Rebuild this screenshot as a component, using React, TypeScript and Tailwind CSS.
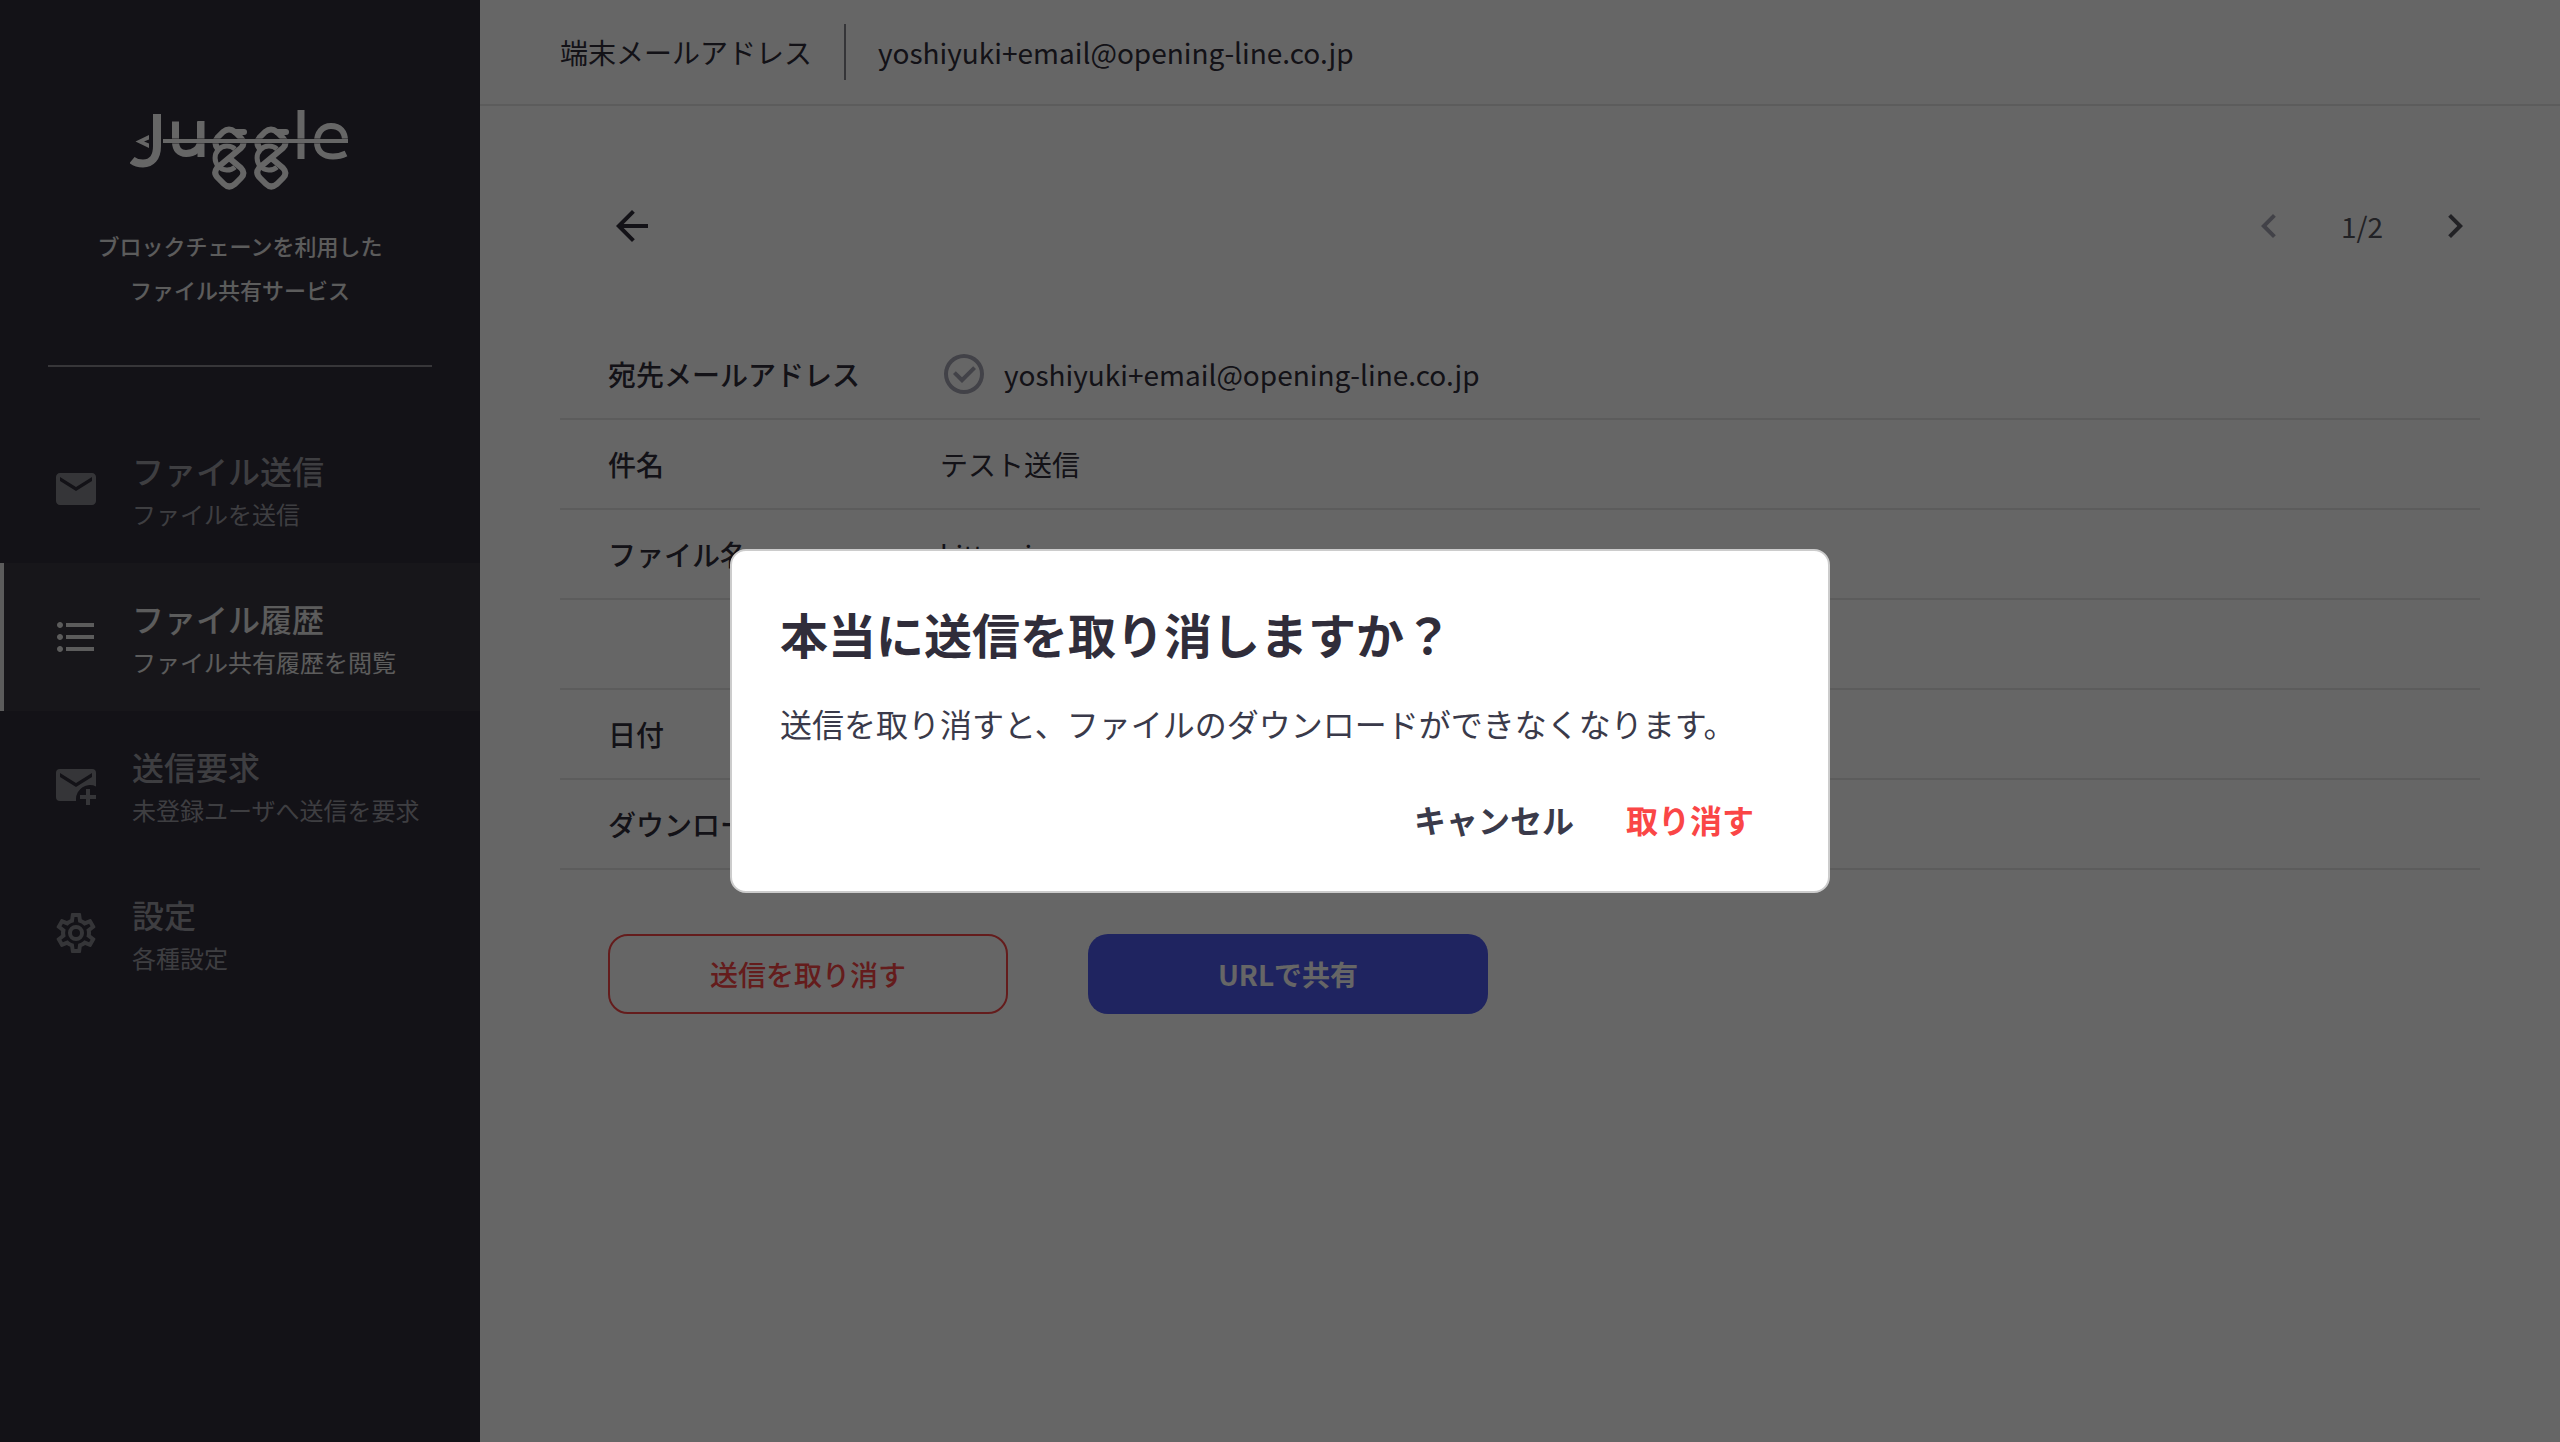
import { MdArrowBack, MdChevronLeft, MdChevronRight, MdEmail, MdFormatListBulleted } from "react-icons/md"
import type { ReactNode } from "react"

interface NavItem {
  title: string
  text: string
  icon: ReactNode
  active?: boolean
}

interface Detail {
  label: string
  value: string
  checked?: boolean
}

function MailPlusIcon() {
  return (
    <svg viewBox="0 0 24 24" className="size-12" fill="currentColor" aria-hidden="true">
      <path d="M4 4a2 2 0 0 0-2 2v12a2 2 0 0 0 2 2h8v-1a7 7 0 0 1 10-6.300V6a2 2 0 0 0-2-2H4zm16 4-8 5-8-5V6l8 5 8-5v2z" />
      <path d="M17 14v3h-3v2h3v3h2v-3h3v-2h-3v-3z" />
    </svg>
  )
}

function CogIcon() {
  return (
    <svg viewBox="0 0 24 24" className="size-12" fill="currentColor" aria-hidden="true">
      <path d="M12 8a4 4 0 0 1 4 4 4 4 0 0 1-4 4 4 4 0 0 1-4-4 4 4 0 0 1 4-4m0 2a2 2 0 0 0-2 2 2 2 0 0 0 2 2 2 2 0 0 0 2-2 2 2 0 0 0-2-2m-2 12c-.25 0-.46-.18-.5-.42l-.37-2.650c-.63-.25-1.170-.59-1.690-.99l-2.490 1.010c-.22.080-.49 0-.61-.22l-2-3.460c-.13-.22-.07-.49.120-.64l2.110-1.660L4.500 12l.070-1-2.110-1.630c-.19-.15-.25-.42-.12-.64l2-3.460c.120-.22.390-.31.610-.22l2.490 1c.52-.39 1.060-.73 1.690-.98l.370-2.650c.040-.24.250-.42.500-.42h4c.250 0 .46.180.5.420l.370 2.650c.63.250 1.170.59 1.690.98l2.490-1c.22-.09.490 0 .61.220l2 3.460c.130.220.070.490-.12.640L19.430 11l.070 1-.07 1 2.110 1.630c.19.150.250.420.12.640l-2 3.460c-.12.220-.39.310-.61.220l-2.490-1c-.52.390-1.060.730-1.690.98l-.37 2.650c-.04.240-.25.420-.5.420h-4m1.250-18-.37 2.610c-1.200.250-2.260.89-3.030 1.780L5.440 7.350l-.75 1.300L6.800 10.200a6.500 6.500 0 0 0 0 3.600l-2.120 1.560.750 1.300 2.430-1.040c.77.880 1.820 1.520 3.010 1.760l.370 2.620h1.520l.370-2.610c1.190-.25 2.240-.89 3.010-1.770l2.430 1.040.750-1.300-2.120-1.550c.400-1.170.400-2.440 0-3.610l2.110-1.550-.75-1.300-2.410 1.040a5.400 5.400 0 0 0-3.030-1.770L12.750 4h-1.500z" />
    </svg>
  )
}

function CheckCircleIcon() {
  return (
    <svg viewBox="0 0 24 24" className="size-12 shrink-0 text-[#a5a5b3]" fill="currentColor" aria-hidden="true">
      <path d="M12 2a10 10 0 1 0 0 20 10 10 0 0 0 0-20zm0 18a8 8 0 1 1 0-16 8 8 0 0 1 0 16z" />
      <path d="M11 16.500l7-7-1.410-1.420L11 13.670l-3.090-3.080L6.500 12z" />
    </svg>
  )
}

function Logo() {
  return (
    <svg viewBox="0 0 220 82" className="h-[82px] w-[220px] text-white" fill="none" stroke="currentColor" role="img" aria-label="Juggle">
      <path d="M27 5v32c0 12-6 17.500-14 17.500-5 0-8-1-11-3.500" strokeWidth="8" />
      <path d="M5.500 32.500L19 26v4.500l-5 2 5 2V39z" fill="currentColor" stroke="none" />
      <path d="M45.500 12.500v20c0 8 4 12 10.500 12 8 0 14.500-5 14.500-13v-19" strokeWidth="7" />
      <path d="M71 12v36" strokeWidth="7" />
      <g id="loop" strokeLinejoin="round">
        <path d="M88 40Q83 34 88 28L93 23Q99 18 105 23L111 29Q116 34 111 39L87 59Q83 64 88 69L94 75Q99 80 105 75L111 69Q116 64 111 59L98 48" strokeWidth="6" />
        <path d="M105 23h9" strokeWidth="6" strokeLinecap="round" />
        <path d="M105 40A12 12 0 1 0 105 58" strokeWidth="5" />
      </g>
      <use href="#loop" x="42" />
      <path d="M171 1v49" strokeWidth="7" />
      <path d="M215 32c0-9-5-15-14-15s-14 7-14 16c0 10 7 14.500 16 14.500 6 0 9-1 13-3" strokeWidth="6" />
      <path d="M33 32h185" stroke="#302d3a" strokeOpacity="0.4" strokeWidth="6" />
      <path d="M33 32h185" strokeWidth="4" />
    </svg>
  )
}

const navItems: NavItem[] = [
  { title: "ファイル送信", text: "ファイルを送信", icon: <MdEmail className="size-12" /> },
  { title: "ファイル履歴", text: "ファイル共有履歴を閲覧", icon: <MdFormatListBulleted className="size-12" />, active: true },
  { title: "送信要求", text: "未登録ユーザへ送信を要求", icon: <MailPlusIcon /> },
  { title: "設定", text: "各種設定", icon: <CogIcon /> },
]

const details: Detail[] = [
  { label: "宛先メールアドレス", value: "yoshiyuki+email@opening-line.co.jp", checked: true },
  { label: "件名", value: "テスト送信" },
  { label: "ファイル名", value: "kitten.jpg" },
  { label: "", value: "" },
  { label: "日付", value: "" },
  { label: "ダウンロード", value: "" },
]

function Sidebar() {
  return (
    <aside className="w-[480px] shrink-0 bg-[#302d3a]">
      <div className="mx-12 flex flex-col items-center border-b-2 border-[#89888f] pt-[109px] pb-[54px]">
        <Logo />
        <p className="mt-8 text-center text-[22px] leading-[44px] font-medium text-[#e6e6e6]">
          ブロックチェーンを利用した
          <br />
          ファイル共有サービス
        </p>
      </div>
      <nav className="mt-12">
        {navItems.map((item) => (
          <a
            key={item.title}
            href="#"
            className={
              item.active
                ? "flex h-[148px] items-center gap-8 border-l-4 border-[#e6e6e6] bg-[#3b3941] pl-12 text-[#e6e6e6]"
                : "flex h-[148px] items-center gap-8 border-l-4 border-transparent pl-12 text-[#85868c]"
            }
          >
            {item.icon}
            <span className={item.active ? "flex flex-col pt-1.5" : "flex flex-col pt-1.5 text-[#9c9ca4]"}>
              <span className="text-[32px] leading-[44px] font-medium">{item.title}</span>
              <span className="text-2xl leading-[44px]">{item.text}</span>
            </span>
          </a>
        ))}
      </nav>
    </aside>
  )
}

function DetailTable() {
  return (
    <table className="mt-[79px] w-full text-left text-[28px] leading-10 text-[#302d3a]">
      <tbody>
        {details.map((row, index) => (
          <tr key={index} className="h-[90px] border-b-2 border-[#e6e6e6]">
            <th scope="row" className="w-[380px] pl-12 font-medium">{row.label}</th>
            <td>
              <div className="flex items-center gap-4">
                {row.checked && <CheckCircleIcon />}
                {row.value}
              </div>
            </td>
          </tr>
        ))}
      </tbody>
    </table>
  )
}

function ConfirmDialog() {
  return (
    <div className="fixed inset-0 flex items-center justify-center bg-black/60">
      <div
        role="dialog"
        aria-modal="true"
        aria-labelledby="dialog-title"
        className="w-[1100px] rounded-2xl border-2 border-[#cccccc] bg-white px-12 pt-[46px] pb-12 text-[#3a3a4a]"
      >
        <h2 id="dialog-title" className="text-5xl leading-[72px] font-bold text-[#302d3a]">本当に送信を取り消しますか？</h2>
        <p className="mt-[30px] text-[32px] leading-[48px]">送信を取り消すと、ファイルのダウンロードができなくなります。</p>
        <div className="mt-12 flex justify-end gap-[52px] pr-[26px] text-[32px] leading-[48px] font-bold">
          <button type="button">キャンセル</button>
          <button type="button" className="text-[#fa4646]">取り消す</button>
        </div>
      </div>
    </div>
  )
}

export default function App() {
  return (
    <div className="flex min-h-screen bg-white font-['Noto_Sans_CJK_JP',sans-serif] text-[#302d3a]">
      <Sidebar />
      <div className="flex-1">
        <header className="flex items-center border-b-2 border-[#e6e6e6] px-20 py-6 text-[28px] leading-10">
          <span>端末メールアドレス</span>
          <span className="mx-8 h-14 w-0.5 bg-[#85868c]" />
          <span>yoshiyuki+email@opening-line.co.jp</span>
        </header>
        <main className="px-20 pt-24">
          <div className="flex items-center justify-between pr-px pl-12">
            <button type="button" aria-label="戻る">
              <MdArrowBack className="size-12" />
            </button>
            <div className="flex items-center gap-12 text-[28px] leading-10 text-[#55555e]">
              <button type="button" aria-label="前へ" disabled className="text-[#a5a5b3]">
                <MdChevronLeft className="size-12" />
              </button>
              <span>1/2</span>
              <button type="button" aria-label="次へ">
                <MdChevronRight className="size-12" />
              </button>
            </div>
          </div>
          <DetailTable />
          <div className="mt-16 flex gap-20 pl-12 text-[28px] leading-10">
            <button type="button" className="h-20 w-[400px] rounded-[20px] border-2 border-[#fa4646] font-medium text-[#fa4646]">
              送信を取り消す
            </button>
            <button type="button" className="h-20 w-[400px] rounded-[20px] bg-[#4e5af0] font-bold text-white">
              URLで共有
            </button>
          </div>
        </main>
      </div>
      <ConfirmDialog />
    </div>
  )
}
